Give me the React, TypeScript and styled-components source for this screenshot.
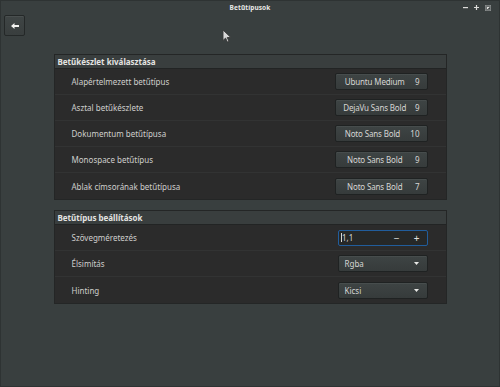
import React, { FC } from "react";
import styled, { createGlobalStyle } from "styled-components";

const GlobalStyle = createGlobalStyle`
    html, body {
        margin: 0;
        padding: 0;
        background: #393f3f;
    }
    body {
        font-family: "Noto Sans", "DejaVu Sans", sans-serif;
        -webkit-font-smoothing: antialiased;
    }
`

const Window = styled.div`
    position: relative;
    box-sizing: border-box;
    width: 500px;
    height: 387px;
    background: #393f3f;
    border: 1px solid #2e3333;
    display: flex;
    flex-direction: column;
    overflow: hidden;
`

const TitleBar = styled.div`
    display: grid;
    grid-template-columns: 1fr auto 1fr;
    align-items: center;
    height: 13px;
`

const Title = styled.div`
    grid-column: 2;
    font-size: 6.5px;
    font-weight: bold;
    color: #e8e8e6;
    letter-spacing: 0.1px;
`

const Controls = styled.div`
    justify-self: end;
    display: flex;
    align-items: center;
    gap: 6px;
    padding-right: 8px;
`

const Toolbar = styled.div`
    display: flex;
    padding: 1px 3px 0;
`

const BackButton = styled.button`
    box-sizing: border-box;
    width: 21px;
    height: 21px;
    padding: 0;
    display: flex;
    align-items: center;
    justify-content: center;
    background: linear-gradient(#3f4545, #393e3e);
    border: 1px solid #242828;
    border-radius: 2px;
    box-shadow: inset 0 1px 0 rgba(255, 255, 255, 0.06);
`

const Content = styled.div`
    display: flex;
    flex-direction: column;
    align-items: center;
    gap: 10px;
    padding-top: 18px;
`

const Panel = styled.section`
    box-sizing: border-box;
    width: 393px;
    background: #2b2b2b;
    border: 1px solid #242626;
`

const PanelHeader = styled.div`
    height: 13px;
    display: flex;
    align-items: center;
    padding-left: 3px;
    background: #393e3e;
    border-bottom: 1px solid #222424;
    font-size: 8px;
    font-weight: bold;
    color: #e4e4e2;
`

const Row = styled.div<{ $last?: boolean }>`
    box-sizing: border-box;
    height: 26px;
    display: flex;
    align-items: center;
    justify-content: space-between;
    padding: 0 18px 0 17px;
    border-bottom: ${p => (p.$last ? "none" : "1px solid #323333")};
`

const Label = styled.span`
    font-size: 8px;
    color: #cfcfcd;
`

const FontButton = styled.div`
    box-sizing: border-box;
    width: 93px;
    height: 17px;
    display: flex;
    align-items: center;
    justify-content: space-between;
    padding: 0 7px 0 4px;
    background: linear-gradient(#3e4444, #363b3b);
    border: 1px solid #1f2222;
    border-radius: 2px;
    box-shadow: inset 0 1px 0 rgba(255, 255, 255, 0.05);
    font-size: 8px;
    color: #d6d6d4;
    white-space: nowrap;
`

const FontName = styled.span`
    flex: 1;
    text-align: center;
    letter-spacing: -0.15px;
`

const FontSize = styled.span`
    margin-left: 5px;
`

const SpinBox = styled.div`
    box-sizing: border-box;
    width: 90px;
    height: 16px;
    display: flex;
    align-items: center;
    background: #262828;
    border: 1px solid #215d9c;
    border-radius: 2px;
    font-size: 8px;
    color: #d6d6d4;
`

const SpinValue = styled.span`
    flex: 1;
    display: flex;
    align-items: center;
    padding-left: 2px;
`

const Caret = styled.span`
    width: 1px;
    height: 9px;
    background: #d6d6d4;
    margin-right: 0.5px;
`

const SpinButton = styled.span`
    width: 20px;
    height: 100%;
    display: flex;
    align-items: center;
    justify-content: center;
    font-size: 10px;
    color: #e0e0de;
`

const Combo = styled.div`
    box-sizing: border-box;
    width: 90px;
    height: 17px;
    display: flex;
    align-items: center;
    justify-content: space-between;
    padding: 0 8px 0 6px;
    background: linear-gradient(#3e4444, #363b3b);
    border: 1px solid #1f2222;
    border-radius: 2px;
    box-shadow: inset 0 1px 0 rgba(255, 255, 255, 0.05);
    font-size: 8px;
    color: #d6d6d4;
`

const Pointer = styled.svg`
    position: absolute;
    left: 221px;
    top: 28px;
`

const fonts = [
    { label: "Alapértelmezett betűtípus", name: "Ubuntu Medium", size: 9 },
    { label: "Asztal betűkészlete", name: "DejaVu Sans Bold", size: 9 },
    { label: "Dokumentum betűtípusa", name: "Noto Sans Bold", size: 10 },
    { label: "Monospace betűtípus", name: "Noto Sans Bold", size: 9 },
    { label: "Ablak címsorának betűtípusa", name: "Noto Sans Bold", size: 7 },
];

const DownArrow: FC = () => (
    <svg width="5" height="3" viewBox="0 0 5 3">
        <path d="M0 0h5L2.5 3z" fill="#e8e8e6" />
    </svg>
);

const App: FC = () => {
    return <>
        <GlobalStyle />
        <Window>
            <TitleBar>
                <Title>Betűtípusok</Title>
                <Controls>
                    <svg width="5" height="5" viewBox="0 0 5 5">
                        <rect x="0" y="2" width="5" height="1.2" fill="#dcdcda" />
                    </svg>
                    <svg width="5" height="5" viewBox="0 0 5 5">
                        <path d="M0 1.9h5v1.2H0zM1.9 0h1.2v5H1.9z" fill="#dcdcda" />
                    </svg>
                    <svg width="6" height="6" viewBox="0 0 6 6">
                        <rect x="0.4" y="0.4" width="5.2" height="5.2" fill="none" stroke="#8a8e8e" strokeWidth="0.8" />
                        <path d="M1.6 1.6l2.8 2.8M4.4 1.6L1.6 4.4" stroke="#e8e8e6" strokeWidth="1.1" />
                    </svg>
                </Controls>
            </TitleBar>
            <Toolbar>
                <BackButton>
                    <svg width="8" height="6" viewBox="0 0 8 6">
                        <path d="M0 3L3.5 0v2h4.5v2H3.5v2z" fill="#f2f2f0" />
                    </svg>
                </BackButton>
            </Toolbar>
            <Content>
                <Panel>
                    <PanelHeader>Betűkészlet kiválasztása</PanelHeader>
                    {fonts.map((f, key) => <Row key={key} $last={key === fonts.length - 1}>
                        <Label>{f.label}</Label>
                        <FontButton>
                            <FontName>{f.name}</FontName>
                            <FontSize>{f.size}</FontSize>
                        </FontButton>
                    </Row>)}
                </Panel>
                <Panel>
                    <PanelHeader>Betűtípus beállítások</PanelHeader>
                    <Row>
                        <Label>Szövegméretezés</Label>
                        <SpinBox>
                            <SpinValue><Caret />1,1</SpinValue>
                            <SpinButton>−</SpinButton>
                            <SpinButton>+</SpinButton>
                        </SpinBox>
                    </Row>
                    <Row>
                        <Label>Élsimítás</Label>
                        <Combo>
                            <span>Rgba</span>
                            <DownArrow />
                        </Combo>
                    </Row>
                    <Row $last>
                        <Label>Hinting</Label>
                        <Combo>
                            <span>Kicsi</span>
                            <DownArrow />
                        </Combo>
                    </Row>
                </Panel>
            </Content>
            <Pointer width="10" height="14" viewBox="0 0 10 14">
                <path d="M1 1v10.5l2.6-2.4 1.8 4 1.6-.7-1.8-3.9H8.8z" fill="#d8d8d8" stroke="#3a3a3a" strokeWidth="0.9" strokeLinejoin="round" />
            </Pointer>
        </Window>
    </>
}

export default App
